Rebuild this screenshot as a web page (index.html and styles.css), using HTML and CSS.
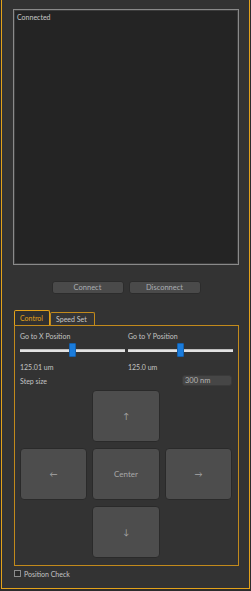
FILE: index.html
```html
<!DOCTYPE html>
<html lang="en">
<head>
    <meta charset="UTF-8">
    <title>Stage Control</title>
    <link rel="stylesheet" href="styles.css">
</head>
<body>
    <div class="frame">
        <div class="log">Connected</div>

        <div class="conn-row">
            <button class="btn">Connect</button>
            <button class="btn">Disconnect</button>
        </div>

        <div class="tabs">
            <div class="tab active">Control</div>
            <div class="tab">Speed Set</div>
        </div>

        <div class="group">
            <div class="pos-grid">
                <div class="pos-col">
                    <div class="label">Go to X Position</div>
                    <div class="slider"><span class="thumb"></span></div>
                    <div class="label">125.01 um</div>
                </div>
                <div class="pos-col">
                    <div class="label">Go to Y Position</div>
                    <div class="slider"><span class="thumb"></span></div>
                    <div class="label">125.0 um</div>
                </div>
            </div>

            <div class="step-row">
                <span class="label">Step size</span>
                <span class="step-input">300 nm</span>
            </div>

            <div class="pad">
                <button class="pad-btn up">&uarr;</button>
                <button class="pad-btn left">&larr;</button>
                <button class="pad-btn center">Center</button>
                <button class="pad-btn right">&rarr;</button>
                <button class="pad-btn down">&darr;</button>
            </div>
        </div>

        <label class="check-row">
            <span class="checkbox"></span>
            <span class="label">Position Check</span>
        </label>
    </div>
</body>
</html>
```

FILE: styles.css
```css
* {
    margin: 0;
    padding: 0;
    box-sizing: border-box;
    font-family: 'Lato', 'Open Sans', sans-serif;
}

body {
    background: #2c2c2c;
    width: 251px;
    height: 591px;
    overflow: hidden;
}

.frame {
    margin-left: 1px;
    width: 249px;
    height: 589px;
    background: #333333;
    border: 1px solid #e3a21a;
    border-top: none;
    padding: 9px 0 0 11px;
    color: #c4c4c4;
    font-size: 7px;
}

.log {
    width: 226px;
    height: 256px;
    background: #242424;
    border: 1px solid #8a8a8a;
    box-shadow: inset 0 0 0 1px #3c3c3c;
    padding: 2px 3px;
    line-height: 10px;
    color: #c8c8c8;
}

.conn-row {
    width: 226px;
    display: flex;
    justify-content: center;
    gap: 5px;
    margin-top: 16px;
}

.btn {
    width: 72px;
    height: 13px;
    background: #4a4a4a;
    border: 1px solid #2c2c2c;
    border-radius: 3px;
    color: #a9adb2;
    font-size: 7.5px;
    line-height: 11px;
}

.tabs {
    display: flex;
    align-items: flex-end;
    margin-top: 16px;
    margin-left: 1px;
    height: 15px;
}

.tab {
    width: 45px;
    height: 13px;
    padding-left: 5px;
    border: 1px solid #c28a1c;
    border-bottom: none;
    border-radius: 2px 2px 0 0;
    background: #353535;
    color: #c8c8c8;
    line-height: 12px;
}

.tab.active {
    height: 15px;
    width: 36px;
    color: #e3a21a;
    background: #303030;
    border-color: #e3a21a;
    line-height: 14px;
}

.group {
    width: 225px;
    height: 241px;
    margin-left: 1px;
    border: 1px solid #c28a1c;
    padding: 5px 5px 0 5px;
}

.pos-grid {
    display: grid;
    grid-template-columns: 105px 105px;
    gap: 3px;
}

.label {
    line-height: 10px;
    color: #c4c4c4;
}

.slider {
    position: relative;
    height: 3px;
    margin: 8px 0 10px;
    background: #e2e2e2;
    border-top: 1px solid #bdbdbd;
}

.thumb {
    position: absolute;
    left: 49px;
    top: -7px;
    width: 7px;
    height: 14px;
    background: #1a7cdc;
    border: 1px solid #1460ad;
    border-radius: 1px;
}

.step-row {
    display: flex;
    justify-content: space-between;
    align-items: center;
    margin-top: 3px;
    height: 11px;
}

.step-input {
    width: 50px;
    height: 11px;
    margin-right: 1px;
    padding-left: 2px;
    background: #464646;
    border: 1px solid #3a3a3a;
    border-radius: 3px;
    color: #b4b4b4;
    font-size: 7.5px;
    line-height: 9px;
}

.pad {
    display: grid;
    grid-template-columns: 67px 68px 67px;
    grid-template-rows: repeat(3, 52px);
    column-gap: 5px;
    row-gap: 6px;
    margin-top: 4px;
}

.pad-btn {
    background: #4d4d4d;
    border: 1px solid #2a2a2a;
    border-radius: 4px;
    color: #a8a8a8;
    font-size: 8px;
}

.up { grid-column: 2; grid-row: 1; }
.left { grid-column: 1; grid-row: 2; }
.center { grid-column: 2; grid-row: 2; }
.right { grid-column: 3; grid-row: 2; }
.down { grid-column: 2; grid-row: 3; }

.check-row {
    display: flex;
    align-items: center;
    gap: 3px;
    height: 9px;
    margin-top: 3px;
    margin-left: 1px;
}

.checkbox {
    width: 7px;
    height: 7px;
    border: 1px solid #8c8c8c;
    background: #2a2a2a;
}
```
